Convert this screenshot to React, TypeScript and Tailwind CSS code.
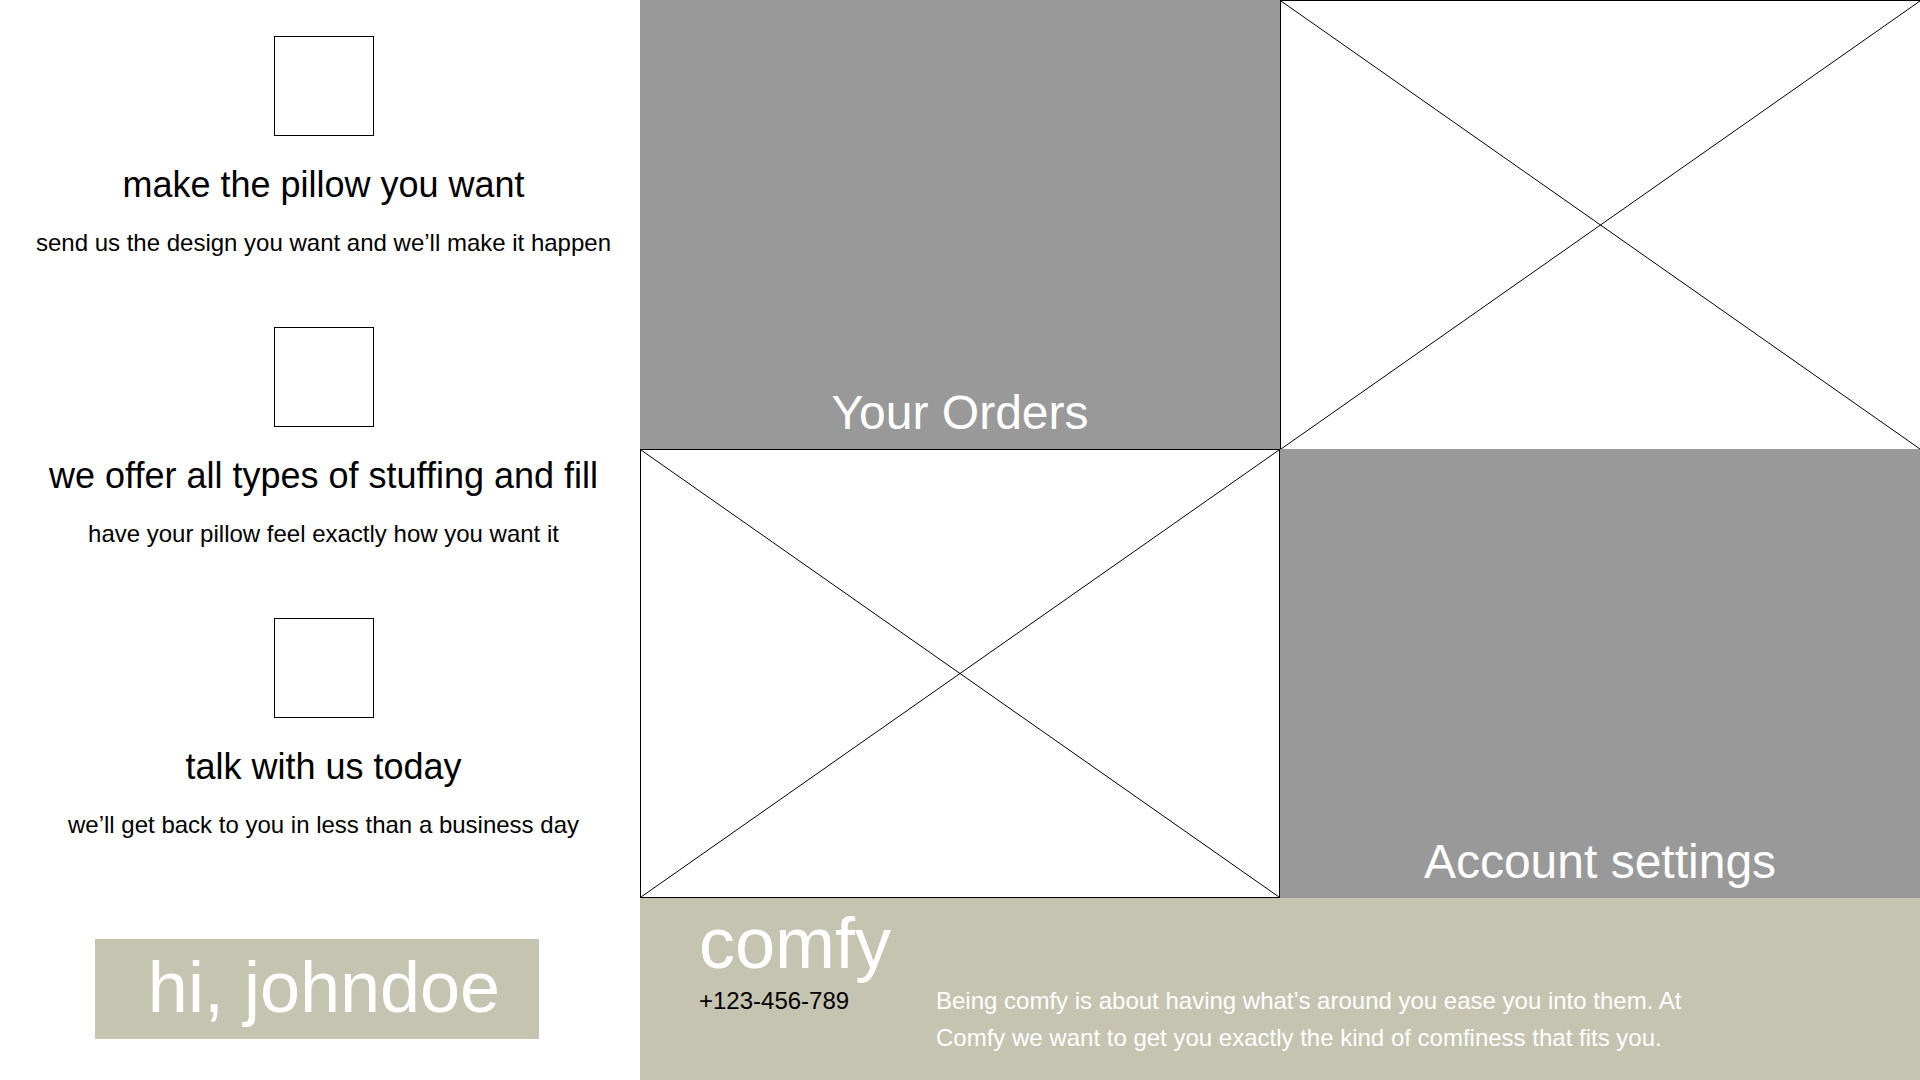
import React from "react";

const font = { fontFamily: '"Liberation Sans", Arial, sans-serif' };

function Cross() {
  return (
    <svg className="block h-full w-full" viewBox="0 0 100 100" preserveAspectRatio="none">
      <line x1="0" y1="0" x2="100" y2="100" stroke="#000" strokeWidth="1" vectorEffect="non-scaling-stroke" />
      <line x1="100" y1="0" x2="0" y2="100" stroke="#000" strokeWidth="1" vectorEffect="non-scaling-stroke" />
    </svg>
  );
}

function Feature({ title, sub }: { title: string; sub: string }) {
  return (
    <div className="flex flex-col items-center">
      <div className="h-[100px] w-[100px] border border-black bg-white" />
      <div className="mt-[28px] text-[36px] leading-[41px] text-black whitespace-nowrap">{title}</div>
      <div className="mt-[24px] text-[24px] leading-[28px] text-black whitespace-nowrap">{sub}</div>
    </div>
  );
}

export default function App() {
  return (
    <div className="flex h-[1080px] w-[1920px] overflow-hidden bg-white" style={font}>
      <div className="flex w-[640px] shrink-0 flex-col pt-[36px]">
        <div className="flex flex-col gap-[70px] pl-[7px]">
          <Feature title="make the pillow you want" sub="send us the design you want and we’ll make it happen" />
          <Feature title="we offer all types of stuffing and fill" sub="have your pillow feel exactly how you want it" />
          <Feature title="talk with us today" sub="we’ll get back to you in less than a business day" />
        </div>
        <div className="ml-[95px] mt-[100px] flex h-[100px] w-[444px] items-center justify-center bg-[#c5c4b1] pl-[14px] pb-[4px]">
          <span className="text-[72px] text-white">hi, johndoe</span>
        </div>
      </div>
      <div className="flex w-[1280px] flex-col">
        <div className="grid h-[898px] grid-cols-2 grid-rows-2">
          <div className="flex items-end justify-center bg-[#999999] pb-[9px]">
            <span className="text-[48px] leading-[54px] text-white">Your Orders</span>
          </div>
          <div className="border-l border-t border-black bg-white">
            <Cross />
          </div>
          <div className="border border-black bg-white">
            <Cross />
          </div>
          <div className="flex items-end justify-center bg-[#999999] pb-[9px]">
            <span className="text-[48px] leading-[54px] text-white">Account settings</span>
          </div>
        </div>
        <div className="flex-1 bg-[#c5c4b1] pl-[59px] pt-[9px]">
          <div className="text-[72px] leading-[72px] text-white">comfy</div>
          <div className="mt-[3px] flex text-[24px] leading-[37px]">
            <div className="w-[237px] shrink-0 text-black">+123-456-789</div>
            <div className="w-[780px] text-white">
              Being comfy is about having what’s around you ease you into them. At Comfy we want to get you exactly the kind of comfiness that fits you.
            </div>
          </div>
        </div>
      </div>
    </div>
  );
}
